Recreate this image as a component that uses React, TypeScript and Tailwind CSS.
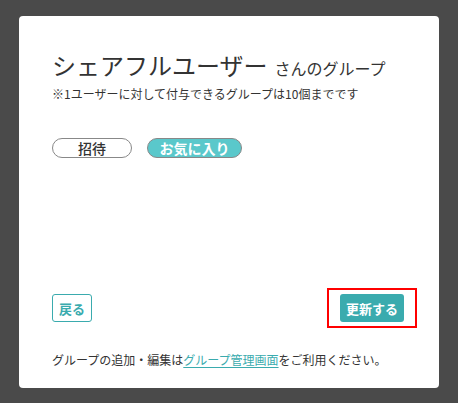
import React from "react";

export default function App() {
  return (
    <div
      className="w-[458px] h-[403px] bg-[#4a4a4a] pt-[16px] pl-[19px]"
      style={{ fontFamily: '"Noto Sans CJK JP", "Noto Sans", sans-serif' }}
    >
      <div className="w-[420px] h-[372px] bg-white rounded-[4px] flex flex-col pl-[33px] pr-[35px] pt-[33px] pb-[19px] text-[#333]">
        <div className="flex items-baseline h-[32px] leading-[32px]">
          <span className="text-[24px]">シェアフルユーザー</span>
          <span className="text-[16px] ml-[7px]">さんのグループ</span>
        </div>
        <div className="text-[12px] leading-[18px] mt-[4px]">
          ※1ユーザーに対して付与できるグループは10個までです
        </div>
        <div className="flex gap-[15px] mt-[35px]">
          <div className="w-[80px] h-[20px] rounded-full border border-[#888] flex items-center justify-center text-[14px] font-medium leading-none text-[#333]">
            招待
          </div>
          <div className="w-[95px] h-[20px] rounded-full border border-[#888] bg-[#5ac8cb] flex items-center justify-center text-[14px] font-bold leading-none text-white">
            お気に入り
          </div>
        </div>
        <div className="mt-auto flex justify-between items-center">
          <button className="w-[40px] h-[28px] rounded-[3px] border border-[#3aabae] text-[#3aabae] text-[13px] font-bold leading-none flex items-center justify-center">
            戻る
          </button>
          <div className="relative">
            <button className="w-[64px] h-[28px] rounded-[3px] bg-[#3aabae] text-white text-[13px] font-bold leading-none flex items-center justify-center">
              更新する
            </button>
            <div className="absolute left-[-13px] top-[-6px] w-[90px] h-[40px] border-2 border-[#f00] pointer-events-none" />
          </div>
        </div>
        <div className="mt-[29px] text-[12px] leading-[18px]">
          グループの追加・編集は
          <span className="text-[#3aabae] underline underline-offset-2">グループ管理画面</span>
          をご利用ください。
        </div>
      </div>
    </div>
  );
}
